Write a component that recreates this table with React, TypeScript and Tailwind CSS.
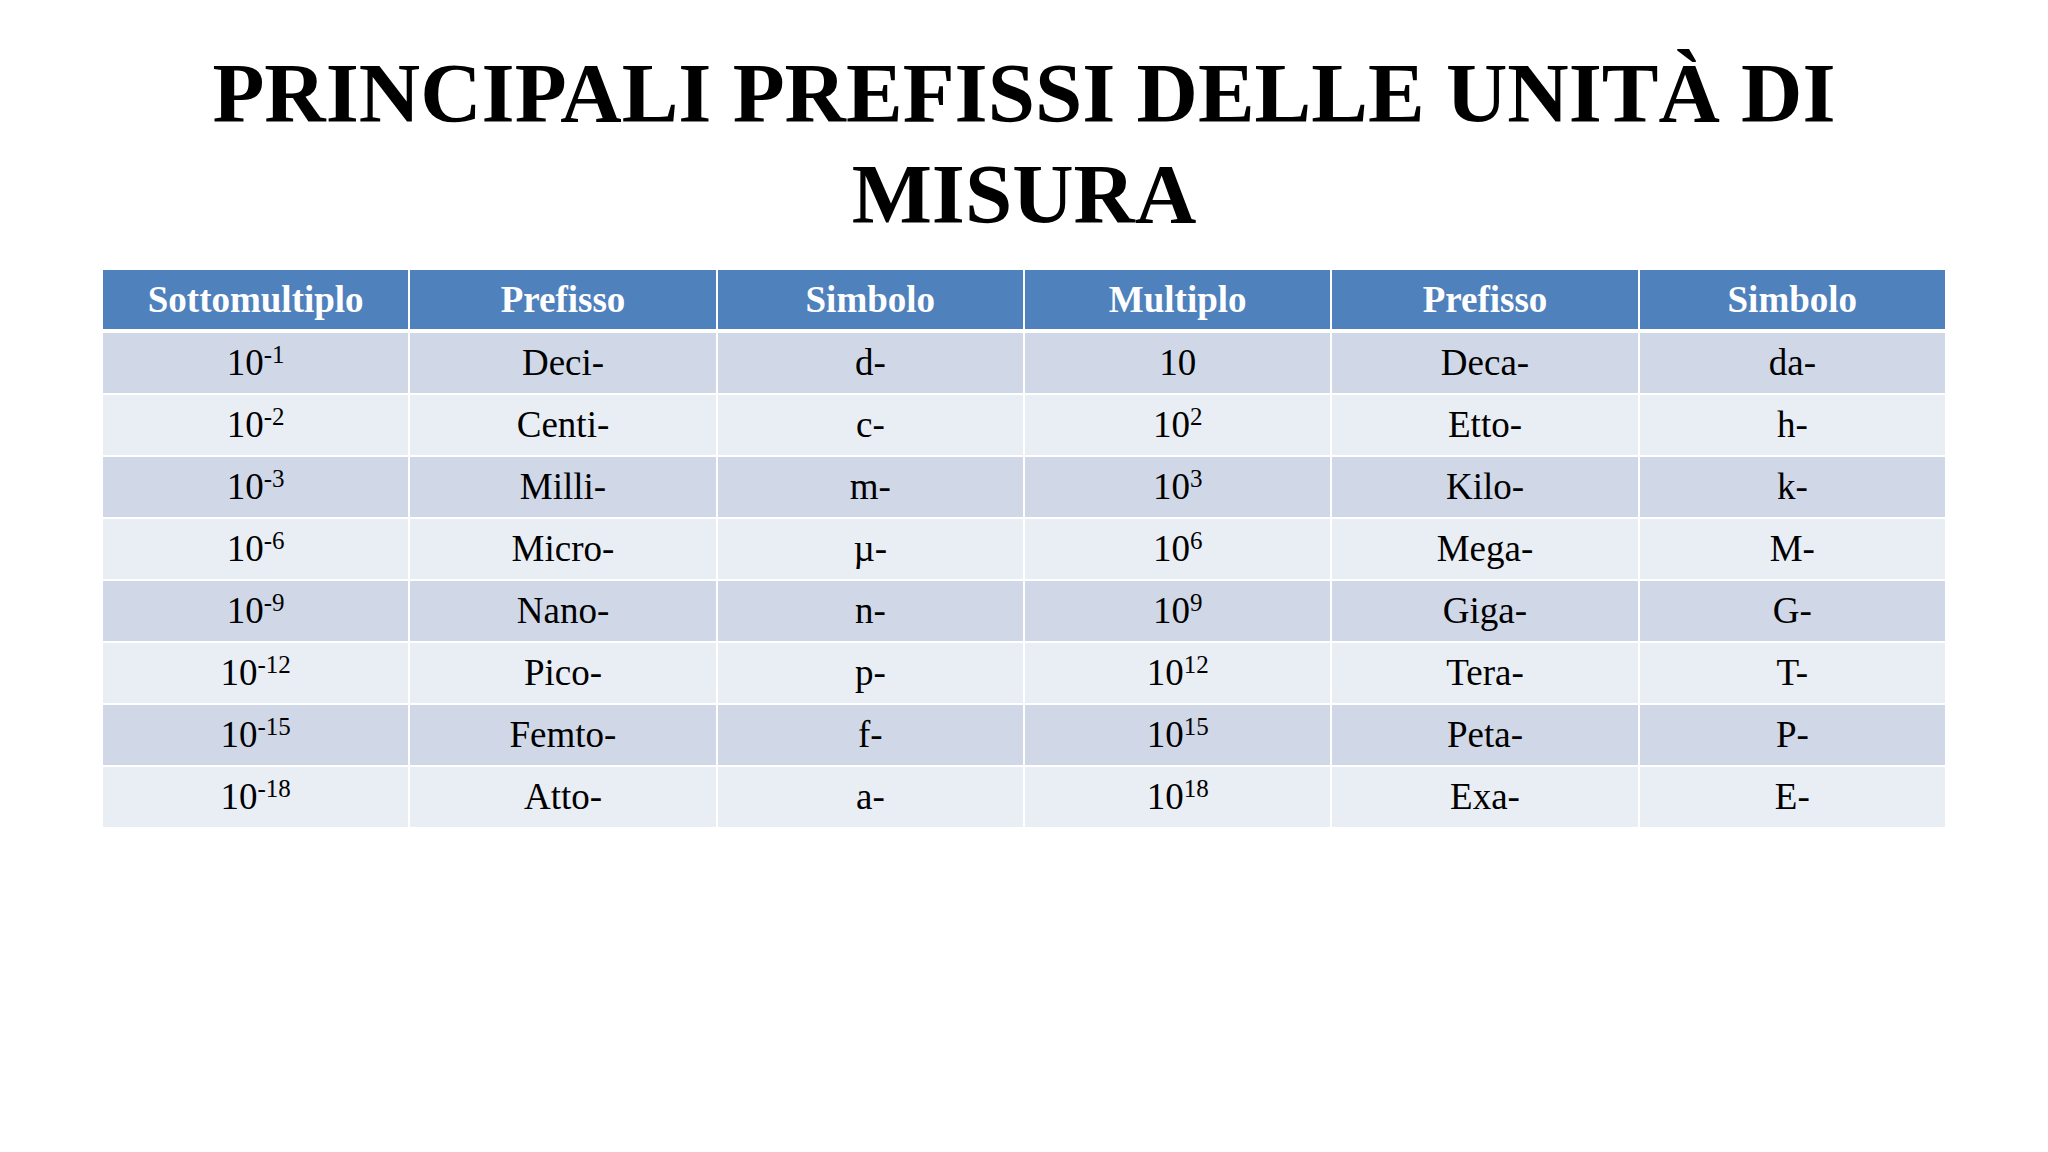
const headers = ["Sottomultiplo", "Prefisso", "Simbolo", "Multiplo", "Prefisso", "Simbolo"];

const rows: [string, string, string, string | null, string, string][] = [
  ["-1", "Deci-", "d-", null, "Deca-", "da-"],
  ["-2", "Centi-", "c-", "2", "Etto-", "h-"],
  ["-3", "Milli-", "m-", "3", "Kilo-", "k-"],
  ["-6", "Micro-", "µ-", "6", "Mega-", "M-"],
  ["-9", "Nano-", "n-", "9", "Giga-", "G-"],
  ["-12", "Pico-", "p-", "12", "Tera-", "T-"],
  ["-15", "Femto-", "f-", "15", "Peta-", "P-"],
  ["-18", "Atto-", "a-", "18", "Exa-", "E-"],
];

function Power({ exp }: { exp: string | null }) {
  return (
    <span>
      10
      {exp && <sup className="text-[25px]">{exp}</sup>}
    </span>
  );
}

export default function App() {
  return (
    <div
      className="w-[2048px] h-[1152px] bg-white text-black overflow-hidden flex flex-col items-center"
      style={{ fontFamily: '"Liberation Serif", "Times New Roman", serif' }}
    >
      {/* Title */}
      <h1 className="mt-[43px] w-[1700px] text-center font-bold text-[85px] leading-[101px]">
        PRINCIPALI PREFISSI DELLE UNITÀ DI MISURA
      </h1>

      {/* Table */}
      <div className="mt-[25px] w-[1842px] flex flex-col">
        <div className="grid grid-cols-6 gap-x-[2px] h-[59px]">
          {headers.map((h, i) => (
            <div
              key={i}
              className="bg-[#4f81bd] text-white font-bold text-[37px] flex items-center justify-center"
            >
              {h}
            </div>
          ))}
        </div>

        <div className="mt-[4px] flex flex-col gap-y-[2px]">
          {rows.map((r, i) => (
            <div key={i} className="grid grid-cols-6 gap-x-[2px] h-[60px]">
              {[
                <Power exp={r[0]} />,
                r[1],
                r[2],
                <Power exp={r[3]} />,
                r[4],
                r[5],
              ].map((cell, j) => (
                <div
                  key={j}
                  className={`${i % 2 === 0 ? "bg-[#d0d8e8]" : "bg-[#e9edf4]"} text-[37px] flex items-center justify-center`}
                >
                  {cell}
                </div>
              ))}
            </div>
          ))}
        </div>
      </div>
    </div>
  );
}
